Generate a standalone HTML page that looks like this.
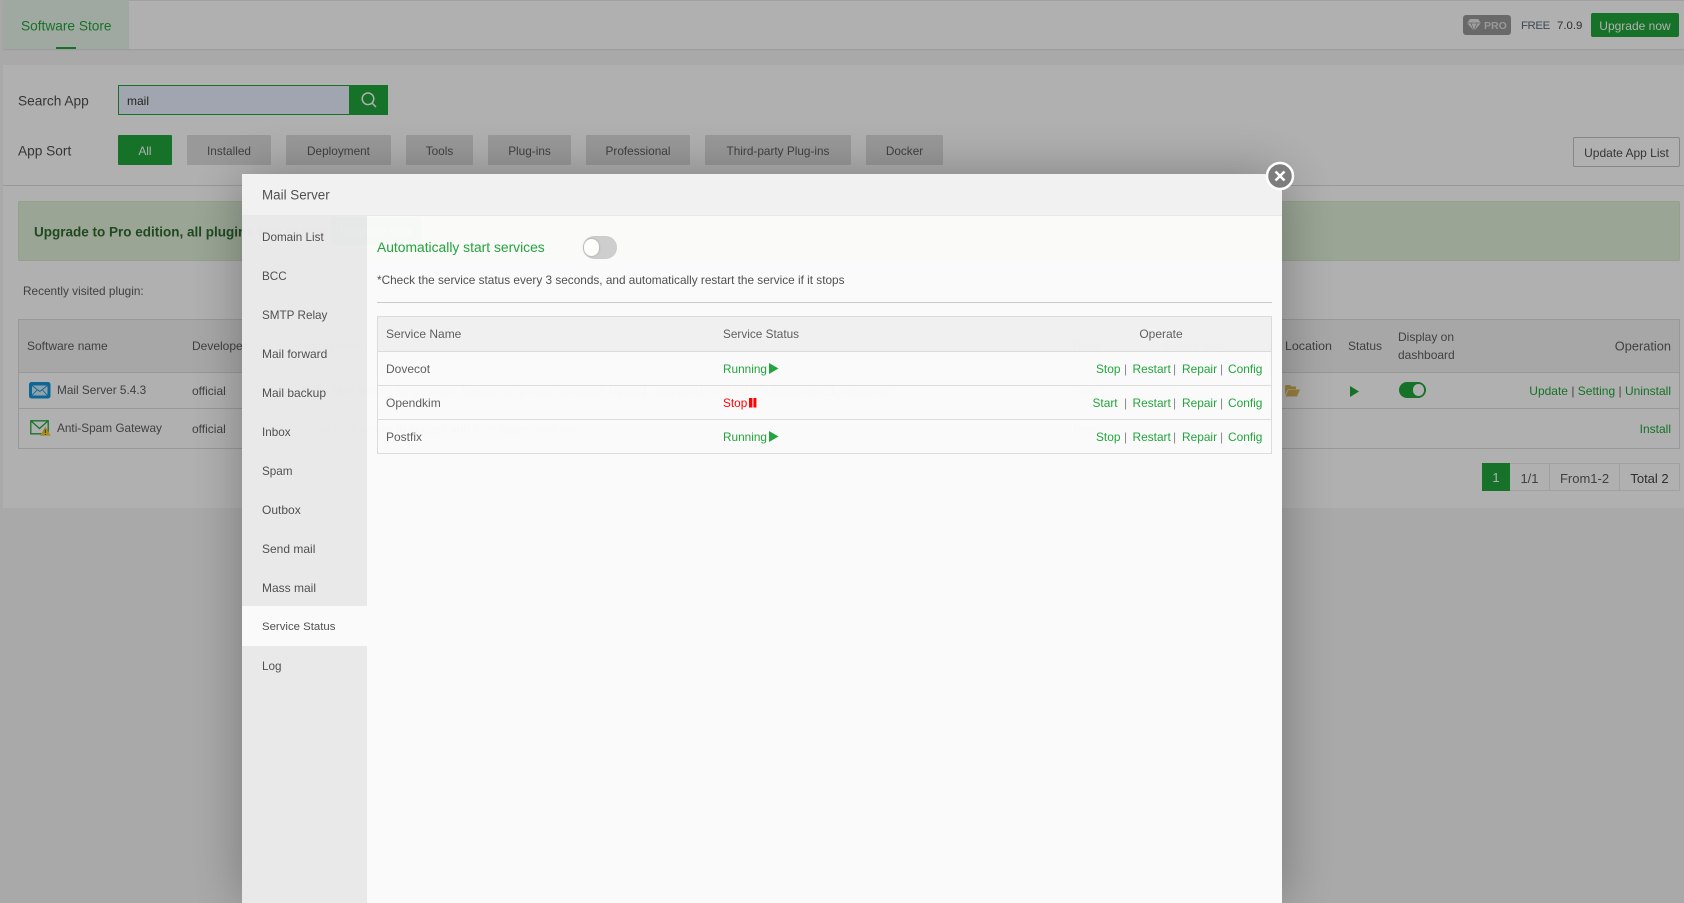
<!DOCTYPE html>
<html><head><meta charset="utf-8"><title>Software Store</title>
<style>
*{box-sizing:border-box}
html,body{margin:0;padding:0;width:1684px;height:903px;overflow:hidden;background:#f5f5f5;font-family:"Liberation Sans",sans-serif;font-size:12px;color:#5e5e5e}
.a{position:absolute;white-space:nowrap}
.c{transform:translateY(-50%)}
.g{color:#20a53a}
.sort{position:absolute;top:135px;height:30px;line-height:33px;text-align:center;background:#dedede;color:#5e5e5e;border-radius:1px;font-size:11.8px}
#overlay{position:absolute;left:0;top:0;width:1684px;height:903px;background:rgba(0,0,0,.31)}
#modal{position:absolute;left:242px;top:174px;width:1040px;height:729px;background:#fcfcfc;opacity:.98;box-shadow:1px 1px 50px rgba(0,0,0,.3)}
.m{position:absolute;left:0;width:125px;height:39px;line-height:41px;padding-left:20px;color:#4f4f4f;font-size:11.7px}
.hl{position:absolute;left:135px;width:895px;height:1px;background:#ddd}
.lk{position:absolute;color:#20a53a;white-space:nowrap;transform:translateY(-50%);font-size:11.9px}
.bar{position:absolute;color:#888;white-space:nowrap;transform:translateY(-50%)}
.pg{position:absolute;top:463px;height:28px;line-height:30px;text-align:center;border:1px solid #e8e8e8;border-left:0;font-size:13px;color:#5e5e5e}
</style></head>
<body>
<!-- top bar -->
<div class="a" style="left:3px;top:0;width:1681px;height:49px;background:#fff;border-top:1px solid #e8e8e8;box-shadow:0 1px 1px #ddd"></div>
<div class="a" style="left:3px;top:0;width:126px;height:49px;background:#e8f5e9"></div>
<div class="a c g" style="left:21px;top:26px;font-size:13.7px">Software Store</div>
<div class="a" style="left:56px;top:47px;width:20px;height:2px;background:#20a53a"></div>
<div class="a" style="left:1463px;top:15px;width:48px;height:20px;background:#999;border-radius:3px"></div>
<svg class="a" style="left:1467px;top:19px" width="14" height="12" viewBox="0 0 14 12"><path d="M3 0H11L14 4L7 12L0 4Z" fill="#e6e6e6"/><path d="M4 4L7 12L10 4M0 4H14" stroke="#999" stroke-width=".8" fill="none"/></svg>
<div class="a c" style="left:1484px;top:25.5px;color:#ddd;font-size:10.5px;font-weight:bold">PRO</div>
<div class="a c" style="left:1521px;top:26px;color:#5a6a7a;font-size:11.4px;letter-spacing:-.4px">FREE</div>
<div class="a c" style="left:1557px;top:26px;color:#444;font-size:11.4px">7.0.9</div>
<div class="a" style="left:1591px;top:13px;width:88px;height:24px;line-height:26px;background:#20a53a;color:#fff;text-align:center;border-radius:2px;font-size:12px">Upgrade now</div>
<!-- main panel -->
<div class="a" style="left:3px;top:65px;width:1681px;height:443px;background:#fff"></div>
<div class="a c" style="left:18px;top:100.5px;font-size:13.7px;color:#4f4f4f">Search App</div>
<div class="a" style="left:118px;top:85px;width:232px;height:30px;background:#e8f0fe;border:1px solid #20a53a;line-height:30px;padding-left:8px;color:#333">mail</div>
<div class="a" style="left:349px;top:85px;width:39px;height:30px;background:#20a53a"></div>
<svg class="a" style="left:360px;top:91px" width="18" height="18" viewBox="0 0 18 18"><circle cx="8" cy="7.8" r="5.8" fill="none" stroke="#fff" stroke-width="1.5"/><path d="M12 12L16 16" stroke="#fff" stroke-width="1.5"/></svg>
<div class="a c" style="left:18px;top:150.5px;font-size:13.7px;color:#4f4f4f">App Sort</div>
<div class="sort" style="left:118px;width:54px;background:#20a53a;color:#fff">All</div>
<div class="sort" style="left:187px;width:84px">Installed</div>
<div class="sort" style="left:286px;width:105px">Deployment</div>
<div class="sort" style="left:406px;width:67px">Tools</div>
<div class="sort" style="left:488px;width:83px">Plug-ins</div>
<div class="sort" style="left:586px;width:104px">Professional</div>
<div class="sort" style="left:705px;width:146px">Third-party Plug-ins</div>
<div class="sort" style="left:866px;width:77px">Docker</div>
<div class="a" style="left:1573px;top:137px;width:107px;height:30px;line-height:31px;text-align:center;border:1px solid #c4c4c4;border-radius:2px;background:#fff;color:#4f4f4f">Update App List</div>
<div class="a" style="left:3px;top:185px;width:1681px;height:1px;background:#ddd"></div>
<div class="a" style="left:18px;top:201px;width:1662px;height:60px;background:#dff0d8;border:1px solid #d6e9c6;border-radius:2px"></div>
<div class="a c" style="left:34px;top:231.5px;font-size:13.5px;font-weight:bold;color:#2f6b30">Upgrade to Pro edition, all plugins free to use!</div>
<div class="a" style="left:331px;top:217px;width:90px;height:28px;line-height:28px;background:#20a53a;color:#fff;text-align:center;border-radius:2px">Upgrade now</div>
<div class="a c" style="left:23px;top:291px;color:#5e5e5e;font-size:11.8px">Recently visited plugin:</div>
<!-- table -->
<div class="a" style="left:18px;top:319px;width:1662px;height:130px;border:1px solid #ddd"></div>
<div class="a" style="left:19px;top:320px;width:1660px;height:52px;background:#f2f2f2"></div>
<div class="a" style="left:18px;top:372px;width:1662px;height:1px;background:#ddd"></div>
<div class="a" style="left:18px;top:408px;width:1662px;height:1px;background:#ddd"></div>
<div class="a c" style="left:27px;top:345.5px">Software name</div>
<div class="a c" style="left:192px;top:345.5px">Developer</div>
<div class="a c" style="left:302px;top:345.5px">Instructions</div>
<div class="a c" style="left:1073px;top:345.5px">Price</div>
<div class="a c" style="left:1165px;top:345.5px">Expire date</div>
<div class="a c" style="left:1285px;top:345.5px;font-size:12.4px">Location</div>
<div class="a c" style="left:1348px;top:345.5px">Status</div>
<div class="a" style="left:1398px;top:328px;line-height:18px;color:#5e5e5e">Display on<br>dashboard</div>
<div class="a c" style="right:13px;top:345.5px;font-size:12.8px">Operation</div>
<svg class="a" style="left:29px;top:382px" width="22" height="17" viewBox="0 0 22 17"><rect width="21.5" height="16.5" rx="2.5" fill="#1296db"/><rect x="3" y="3.5" width="15.5" height="10" fill="#cfe9f7"/><path d="M3 3.5L10.75 9.5L18.5 3.5M3 13.5L8 8M18.5 13.5L13.5 8" stroke="#1296db" stroke-width=".9" fill="none"/></svg>
<div class="a c" style="left:57px;top:390px;color:#5e5e5e;font-size:11.8px">Mail Server 5.4.3</div>
<div class="a c" style="left:192px;top:391px">official</div>
<div class="a c" style="left:302px;top:391px">Build Mail Server for yourself, Based on [postfix, dovecot, rspam] , Supports centos7/8, ubuntu 20/21, debian10</div>
<div class="a c" style="left:1073px;top:391px">Free</div>
<div class="a c" style="left:1165px;top:391px">--</div>
<svg class="a" style="left:1285px;top:384px" width="15" height="13" viewBox="0 0 15 13"><path d="M0 2.5Q0 1 1.5 1H5L6.5 2.5H11V5H3L0 11Z" fill="#dcb85a"/><path d="M3.5 5.5H15L12 12.5H.5Z" fill="#dcb85a"/></svg>
<svg class="a" style="left:1350px;top:386px" width="10" height="11" viewBox="0 0 10 11"><path d="M0 0L9 5.5L0 11Z" fill="#20a53a"/></svg>
<div class="a" style="left:1399px;top:382px;width:27px;height:16px;border-radius:8px;background:#20a53a"></div>
<div class="a" style="left:1413px;top:384px;width:11px;height:12px;border-radius:6px;background:#fff"></div>
<div class="a c g" style="right:13px;top:391px;font-size:12px"><span>Update</span> <span style="color:#666">|</span> <span>Setting</span> <span style="color:#666">|</span> <span>Uninstall</span></div>
<svg class="a" style="left:30px;top:420px" width="21" height="16" viewBox="0 0 21 16"><path d="M.8.8H18.2V13.8H.8ZM.8.8L9.5 8.5L18.2.8" fill="none" stroke="#20a53a" stroke-width="1.3"/><path d="M15.3 6.5L20.8 15.8H10Z" fill="#f0c838"/><path d="M15.3 9.5V13M15.3 14V15" stroke="#5a4a10" stroke-width=".9"/></svg>
<div class="a c" style="left:57px;top:428px;font-size:11.8px">Anti-Spam Gateway</div>
<div class="a c" style="left:192px;top:429px">official</div>
<div class="a c" style="left:302px;top:429px">Allow mail server to access and filter spam/virus mail</div>
<div class="a c" style="left:1073px;top:429px">Free</div>
<div class="a c" style="left:1165px;top:429px">--</div>
<div class="a c g" style="right:13px;top:429px">Install</div>
<!-- pagination -->
<div class="pg" style="left:1482px;width:28px;background:#20a53a;color:#fff;border:0;height:28px">1</div>
<div class="pg" style="left:1510px;width:40px">1/1</div>
<div class="pg" style="left:1550px;width:70px">From1-2</div>
<div class="pg" style="left:1620px;width:60px;color:#444">Total 2</div>

<div id="overlay"></div>

<!-- modal -->
<div id="modal">
  <div class="a" style="left:0;top:0;width:1040px;height:42px;background:#f3f3f3;border-bottom:1px solid #eaeaea"></div>
  <div class="a c" style="left:20px;top:21px;font-size:13.4px;color:#4f4f4f">Mail Server</div>
  <div class="a" style="left:0;top:42px;width:125px;height:687px;background:#ebebeb"></div>
  <div class="m" style="top:43px">Domain List</div>
  <div class="m" style="top:82px">BCC</div>
  <div class="m" style="top:121px">SMTP Relay</div>
  <div class="m" style="top:160px;font-size:12px">Mail forward</div>
  <div class="m" style="top:199px;font-size:12px">Mail backup</div>
  <div class="m" style="top:238px">Inbox</div>
  <div class="m" style="top:277px">Spam</div>
  <div class="m" style="top:316px;font-size:12px">Outbox</div>
  <div class="m" style="top:355px;font-size:12px">Send mail</div>
  <div class="m" style="top:394px;font-size:12px">Mass mail</div>
  <div class="m" style="top:432px;height:40px;background:#fcfcfc;font-size:11.4px;line-height:43px">Service Status</div>
  <div class="m" style="top:472px">Log</div>

  <div class="a c g" style="left:135px;top:72.5px;font-size:13.85px">Automatically start services</div>
  <div class="a" style="left:341px;top:62px;width:34px;height:23px;border-radius:12px;background:#cfcfcf;border:1px solid #ccc"></div>
  <div class="a" style="left:342px;top:65px;width:15px;height:17px;border-radius:8px;background:#fff;box-shadow:0 0 2px #999"></div>
  <div class="a c" style="left:135px;top:106px;color:#4f4f4f;font-size:11.8px">*Check the service status every 3 seconds, and automatically restart the service if it stops</div>
  <div class="hl" style="top:128px;background:#ccc"></div>

  <div class="a" style="left:135px;top:142px;width:895px;height:138px;border:1px solid #ddd"></div>
  <div class="a" style="left:136px;top:143px;width:893px;height:34px;background:#f2f2f2"></div>
  <div class="hl" style="top:177px"></div>
  <div class="hl" style="top:211px"></div>
  <div class="hl" style="top:245px"></div>
  <div class="a c" style="left:144px;top:160px;color:#5e5e5e">Service Name</div>
  <div class="a c" style="left:481px;top:160px;color:#5e5e5e;font-size:11.8px">Service Status</div>
  <div class="a" style="left:919px;top:160px;transform:translate(-50%,-50%);color:#5e5e5e">Operate</div>

  <div class="a c" style="left:144px;top:195px">Dovecot</div>
  <div class="a c" style="left:144px;top:229px">Opendkim</div>
  <div class="a c" style="left:144px;top:263px">Postfix</div>

  <div class="a c g" style="left:481px;top:195px;font-size:11.8px">Running</div>
  <svg class="a" style="left:527px;top:189px" width="10" height="11"><path d="M0 0L9.5 5.5L0 11Z" fill="#20a53a"/></svg>
  <div class="a c" style="left:481px;top:229px;color:#f00;font-size:11.8px">Stop</div>
  <svg class="a" style="left:507px;top:224px" width="8" height="10"><rect width="3.4" height="9.5" fill="#f00"/><rect x="4.4" width="3" height="9.5" fill="#f00"/></svg>
  <div class="a c g" style="left:481px;top:263px;font-size:11.8px">Running</div>
  <svg class="a" style="left:527px;top:257px" width="10" height="11"><path d="M0 0L9.5 5.5L0 11Z" fill="#20a53a"/></svg>

  <div class="lk" style="left:854px;top:195px">Stop</div><div class="bar" style="left:882px;top:195px">|</div>
  <div class="lk" style="left:890.5px;top:195px">Restart</div><div class="bar" style="left:931px;top:195px">|</div>
  <div class="lk" style="left:940px;top:195px">Repair</div><div class="bar" style="left:978px;top:195px">|</div>
  <div class="lk" style="left:986px;top:195px">Config</div>

  <div class="lk" style="left:850.5px;top:229px">Start</div><div class="bar" style="left:882px;top:229px">|</div>
  <div class="lk" style="left:890.5px;top:229px">Restart</div><div class="bar" style="left:931px;top:229px">|</div>
  <div class="lk" style="left:940px;top:229px">Repair</div><div class="bar" style="left:978px;top:229px">|</div>
  <div class="lk" style="left:986px;top:229px">Config</div>

  <div class="lk" style="left:854px;top:263px">Stop</div><div class="bar" style="left:882px;top:263px">|</div>
  <div class="lk" style="left:890.5px;top:263px">Restart</div><div class="bar" style="left:931px;top:263px">|</div>
  <div class="lk" style="left:940px;top:263px">Repair</div><div class="bar" style="left:978px;top:263px">|</div>
  <div class="lk" style="left:986px;top:263px">Config</div>
</div>
<!-- close -->
<svg class="a" style="left:1265px;top:161px" width="30" height="30" viewBox="0 0 30 30"><circle cx="15" cy="15" r="13" fill="#7d7d7d" stroke="#fff" stroke-width="2.5"/><path d="M10.5 10.5L19.5 19.5M19.5 10.5L10.5 19.5" stroke="#fff" stroke-width="2.4"/></svg>
</body></html>
